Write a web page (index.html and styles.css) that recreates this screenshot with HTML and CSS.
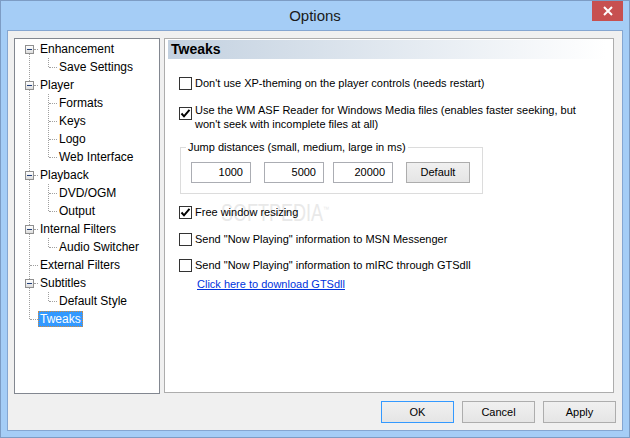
FILE: index.html
```html
<!DOCTYPE html>
<html>
<head>
<meta charset="utf-8">
<link rel="stylesheet" href="styles.css">
</head>
<body>
<div class="window">
  <div class="titlebar">
    <div class="title">Options</div>
    <div class="close">
      <svg width="10" height="10" viewBox="0 0 10 10"><path d="M1 1 L9 9 M9 1 L1 9" stroke="#fff" stroke-width="2" fill="none"/></svg>
    </div>
  </div>
  <div class="client">
    <div class="main">
      <div class="tree">
        <ul class="root">
          <li>
            <div class="row top"><span class="exp"></span><span class="conn short"></span><span class="label">Enhancement</span></div>
            <ul class="kids">
              <li class="row child"><span class="conn"></span><span class="label">Save Settings</span></li>
            </ul>
          </li>
          <li>
            <div class="row top"><span class="exp"></span><span class="conn short"></span><span class="label">Player</span></div>
            <ul class="kids">
              <li class="row child"><span class="conn"></span><span class="label">Formats</span></li>
              <li class="row child"><span class="conn"></span><span class="label">Keys</span></li>
              <li class="row child"><span class="conn"></span><span class="label">Logo</span></li>
              <li class="row child"><span class="conn"></span><span class="label">Web Interface</span></li>
            </ul>
          </li>
          <li>
            <div class="row top"><span class="exp"></span><span class="conn short"></span><span class="label">Playback</span></div>
            <ul class="kids">
              <li class="row child"><span class="conn"></span><span class="label">DVD/OGM</span></li>
              <li class="row child"><span class="conn"></span><span class="label">Output</span></li>
            </ul>
          </li>
          <li>
            <div class="row top"><span class="exp"></span><span class="conn short"></span><span class="label">Internal Filters</span></div>
            <ul class="kids">
              <li class="row child"><span class="conn"></span><span class="label">Audio Switcher</span></li>
            </ul>
          </li>
          <li>
            <div class="row top leaf"><span class="conn"></span><span class="label">External Filters</span></div>
          </li>
          <li>
            <div class="row top"><span class="exp"></span><span class="conn short"></span><span class="label">Subtitles</span></div>
            <ul class="kids">
              <li class="row child"><span class="conn"></span><span class="label">Default Style</span></li>
            </ul>
          </li>
          <li>
            <div class="row top leaf"><span class="conn"></span><span class="label selected">Tweaks</span></div>
          </li>
        </ul>
      </div>
      <div class="panel">
        <div class="header">Tweaks</div>
        <div class="cb-row r1"><span class="cb"></span><span class="cb-text">Don't use XP-theming on the player controls (needs restart)</span></div>
        <div class="cb-row multi r2"><span class="cb checked"><svg width="11" height="11" viewBox="0 0 11 11"><path d="M1.5 5.5 L4 8.3 L9.5 1.8" stroke="#000" stroke-width="2" fill="none"/></svg></span><span class="cb-text">Use the WM ASF Reader for Windows Media files (enables faster seeking, but<br>won't seek with incomplete files at all)</span></div>
        <div class="group">
          <span class="group-label">Jump distances (small, medium, large in ms)</span>
          <div class="group-body">
            <div class="field">1000</div>
            <div class="field">5000</div>
            <div class="field f3">20000</div>
            <div class="btn default-btn">Default</div>
          </div>
        </div>
        <div class="cb-row r3"><span class="cb checked"><svg width="11" height="11" viewBox="0 0 11 11"><path d="M1.5 5.5 L4 8.3 L9.5 1.8" stroke="#000" stroke-width="2" fill="none"/></svg></span><span class="cb-text">Free window resizing</span></div>
        <div class="cb-row r4"><span class="cb"></span><span class="cb-text">Send "Now Playing" information to MSN Messenger</span></div>
        <div class="cb-row r5"><span class="cb"></span><span class="cb-text">Send "Now Playing" information to mIRC through GTSdll</span></div>
        <a class="link" href="#">Click here to download GTSdll</a>
        <div class="watermark">SOFTPEDIA<sup>™</sup></div>
      </div>
    </div>
    <div class="buttons">
      <div class="btn dlg ok">OK</div>
      <div class="btn dlg">Cancel</div>
      <div class="btn dlg">Apply</div>
    </div>
  </div>
</div>
</body>
</html>
```
FILE: styles.css
```css
* { box-sizing: border-box; }
html, body { margin: 0; padding: 0; }
body {
  font-family: "Liberation Sans", Arial, sans-serif;
  font-size: 12px;
  color: #000;
  background: #fff;
}
.window {
  width: 630px;
  height: 438px;
  border: 1px solid #7d9cc4;
  background: #a5cdf6;
  display: flex;
  flex-direction: column;
}
.titlebar {
  height: 29px;
  position: relative;
  flex: none;
}
.title {
  text-align: center;
  font-size: 15px;
  line-height: 29px;
  color: #1a1a1a;
}
.close {
  position: absolute;
  top: 0;
  right: 6px;
  width: 31px;
  height: 20px;
  background: #c75050;
  display: flex;
  align-items: center;
  justify-content: center;
}
.client {
  margin: 0 6px;
  height: 401px;
  border: 1px solid #85a6d1;
  background: #f0f0f0;
  display: flex;
  flex-direction: column;
}
.main {
  display: flex;
  gap: 4px;
  padding: 7px 8px 0 6px;
}
.tree {
  width: 146px;
  height: 356px;
  border: 1px solid #828790;
  background: #fff;
  padding-top: 1px;
}
.tree ul { list-style: none; margin: 0; padding: 0; }
.root { position: relative; }
.root::before {
  content: "";
  position: absolute;
  left: 14px;
  top: 9px;
  bottom: 9px;
  border-left: 1px dotted #a0a0a0;
}
.kids { position: relative; }
.kids::before {
  content: "";
  position: absolute;
  left: 33px;
  top: 0;
  bottom: 9px;
  border-left: 1px dotted #a0a0a0;
}
.row {
  height: 18px;
  display: flex;
  align-items: center;
}
.row.top { padding-left: 10px; }
.row.top.leaf { padding-left: 15px; }
.row.child { padding-left: 34px; }
.exp {
  width: 9px;
  height: 9px;
  border: 1px solid #8f8f8f;
  background: linear-gradient(#ffffff, #dcdcdc);
  position: relative;
  z-index: 1;
  flex: none;
}
.exp::after {
  content: "";
  position: absolute;
  left: 1px;
  top: 3px;
  width: 5px;
  height: 1px;
  background: #22407a;
}
.conn {
  width: 8px;
  height: 1px;
  border-top: 1px dotted #a0a0a0;
  flex: none;
}
.conn.short { width: 4px; }
.label {
  border: 1px solid transparent;
  padding: 0 1px;
  line-height: 14px;
  white-space: nowrap;
}
.label.selected {
  background: #3399ff;
  color: #fff;
  border: 1px dotted #d08a40;
}
.panel {
  width: 450px;
  height: 355px;
  border: 1px solid #adadad;
  background: #fff;
  display: flex;
  flex-direction: column;
  position: relative;
  font-size: 11px;
}
.header {
  margin: 1px 7px 0 3px;
  height: 19px;
  background: linear-gradient(to right, #c3d1e0, #ffffff);
  font-weight: bold;
  font-size: 14px;
  line-height: 19px;
  padding-left: 3px;
}
.cb-row {
  display: flex;
  align-items: center;
  min-height: 14px;
  margin-left: 14px;
  line-height: 14px;
  position: relative;
  z-index: 1;
}
.cb-row.multi { align-items: flex-start; }
.cb-row.multi .cb { margin-top: 4px; }
.cb {
  width: 13px;
  height: 13px;
  border: 1px solid #333;
  background: #fff;
  flex: none;
  margin-right: 3px;
  display: flex;
}
.cb svg { display: block; }
.r1 { margin-top: 17px; }
.r2 { margin-top: 13px; }
.r3 { margin-top: 11px; }
.r4 { margin-top: 13px; }
.r5 { margin-top: 12px; }
.group {
  margin: 16px 0 0 15px;
  width: 303px;
  border: 1px solid #dcdcdc;
  position: relative;
}
.group-label {
  position: absolute;
  top: -8px;
  left: 5px;
  padding: 0 2px;
  background: #fff;
  line-height: 14px;
}
.group-body {
  display: flex;
  padding: 14px 0 10px 10px;
}
.field {
  width: 60px;
  height: 21px;
  border: 1px solid #abadb3;
  text-align: right;
  padding-right: 7px;
  line-height: 19px;
  margin-right: 13px;
}
.field.f3 { margin-right: 13px; }
.field:nth-child(2) { margin-right: 9px; }
.btn {
  border: 1px solid #adadad;
  background: linear-gradient(#f0f0f0, #e5e5e5);
  text-align: center;
  font-size: 11px;
}
.default-btn {
  width: 64px;
  height: 21px;
  line-height: 19px;
}
.link {
  margin: 5px 0 0 32px;
  line-height: 14px;
  color: #0033dd;
  text-decoration: underline;
  align-self: flex-start;
}
.watermark {
  position: absolute;
  left: 56px;
  top: 160px;
  font-size: 24px;
  color: #e9e9e9;
  transform: scaleX(0.75);
  transform-origin: left top;
  white-space: nowrap;
  z-index: 0;
}
.watermark sup { font-size: 8px; }
.buttons {
  display: flex;
  justify-content: flex-end;
  gap: 8px;
  padding-right: 6px;
  margin-top: 7px;
}
.btn.dlg {
  width: 73px;
  height: 22px;
  line-height: 20px;
}
.btn.ok { border-color: #3399ff; }
```
